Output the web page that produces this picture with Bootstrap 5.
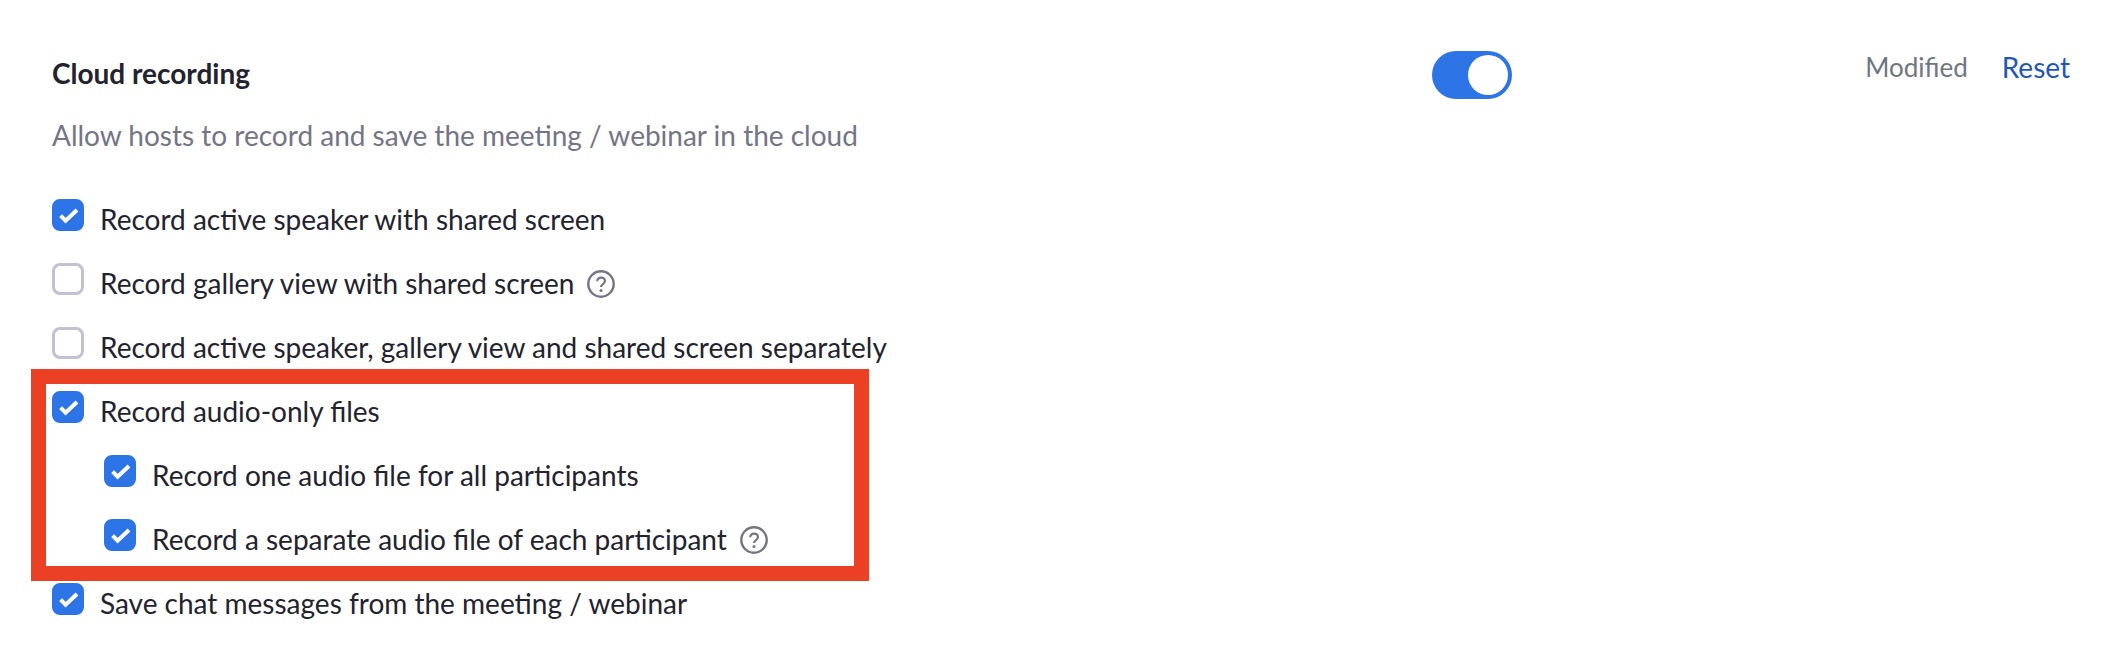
<!DOCTYPE html>
<html lang="en">
<head>
<meta charset="utf-8">
<title>Cloud recording</title>
<link rel="stylesheet" href="https://cdn.jsdelivr.net/npm/bootstrap@5.3.0/dist/css/bootstrap.min.css">
<style>
html,body{height:100%;}
body{background:#fff;font-family:"Lato","Liberation Sans",sans-serif;font-size:28px;color:#23232f;overflow:hidden;}
.setting-wrap{padding:46px 36px 0 52px;}
.setting-head{height:54px;}
.setting-title{font-size:28px;font-weight:700;line-height:54px;width:1381px;margin:0;}
.setting-switch{width:80px;height:48px;background:#2d74e7;border-radius:24px;padding:4px;flex:none;margin-top:4px;}
.setting-knob{width:40px;height:40px;border-radius:50%;background:#fff;}
.setting-modified{color:#6e7680;font-size:26px;margin-left:353px;line-height:54px;margin-bottom:13px;}
.setting-reset{color:#1f58b8;margin-left:34px;text-decoration:none;line-height:54px;margin-bottom:13px;}
.setting-desc{color:#747487;margin:0;line-height:64px;height:64px;margin-top:3px;}
.opt-list{padding-top:21px;}
.opt-row{height:64px;gap:16px;}
.opt-nested{padding-left:52px;}
.opt-row .form-check-input{width:32px;height:32px;margin:0 0 10px 0;border:3px solid #c1c1d3;border-radius:8px;flex:none;background-color:#fff;}
.opt-row .form-check-input:checked{background-color:#2d74e7;border-color:#2d74e7;background-origin:border-box;background-size:32px 32px;background-image:url("data:image/svg+xml,%3csvg xmlns='http://www.w3.org/2000/svg' viewBox='0 0 32 32'%3e%3cpath fill='none' stroke='%23fff' stroke-width='4' d='M8.6 16.6l5 5L25 11'/%3e%3c/svg%3e");}
.opt-label{line-height:64px;white-space:nowrap;padding-bottom:2px;}
.opt-help{flex:none;margin-left:-3px;}
.opt-group{position:relative;}
.opt-highlight{position:absolute;left:-21px;top:-11px;width:838px;height:212px;border:15px solid #ec4025;pointer-events:none;}
</style>
</head>
<body>
<div class="setting-wrap">
  <div class="setting-head d-flex align-items-center">
    <h2 class="setting-title">Cloud recording</h2>
    <div class="setting-switch"><div class="setting-knob ms-auto"></div></div>
    <span class="setting-modified">Modified</span>
    <a class="setting-reset" href="#">Reset</a>
  </div>
  <p class="setting-desc">Allow hosts to record and save the meeting / webinar in the cloud</p>
  <div class="opt-list">
    <div class="opt-row d-flex align-items-center"><input class="form-check-input" type="checkbox" checked aria-label="Record active speaker with shared screen"><span class="opt-label">Record active speaker with shared screen</span></div>
    <div class="opt-row d-flex align-items-center"><input class="form-check-input" type="checkbox" aria-label="Record gallery view with shared screen"><span class="opt-label">Record gallery view with shared screen</span>
      <svg class="opt-help" width="28" height="28" viewBox="0 0 28 28" aria-hidden="true"><circle cx="14" cy="14" r="12.7" fill="none" stroke="#747487" stroke-width="2.4"/><path d="M10.2 11.2c0-2.2 1.7-3.6 3.9-3.6s3.8 1.4 3.8 3.4c0 1.7-1 2.5-2.2 3.3-1.1.8-1.7 1.3-1.7 2.7" fill="none" stroke="#747487" stroke-width="2.2"/><circle cx="14" cy="20.4" r="1.5" fill="#747487"/></svg></div>
    <div class="opt-row d-flex align-items-center"><input class="form-check-input" type="checkbox" aria-label="Record active speaker, gallery view and shared screen separately"><span class="opt-label">Record active speaker, gallery view and shared screen separately</span></div>
    <div class="opt-group">
      <div class="opt-row d-flex align-items-center"><input class="form-check-input" type="checkbox" checked aria-label="Record audio-only files"><span class="opt-label">Record audio-only files</span></div>
      <div class="opt-row opt-nested d-flex align-items-center"><input class="form-check-input" type="checkbox" checked aria-label="Record one audio file for all participants"><span class="opt-label">Record one audio file for all participants</span></div>
      <div class="opt-row opt-nested d-flex align-items-center"><input class="form-check-input" type="checkbox" checked aria-label="Record a separate audio file of each participant"><span class="opt-label">Record a separate audio file of each participant</span>
        <svg class="opt-help" width="28" height="28" viewBox="0 0 28 28" aria-hidden="true"><circle cx="14" cy="14" r="12.7" fill="none" stroke="#747487" stroke-width="2.4"/><path d="M10.2 11.2c0-2.2 1.7-3.6 3.9-3.6s3.8 1.4 3.8 3.4c0 1.7-1 2.5-2.2 3.3-1.1.8-1.7 1.3-1.7 2.7" fill="none" stroke="#747487" stroke-width="2.2"/><circle cx="14" cy="20.4" r="1.5" fill="#747487"/></svg></div>
      <div class="opt-highlight"></div>
    </div>
    <div class="opt-row d-flex align-items-center"><input class="form-check-input" type="checkbox" checked aria-label="Save chat messages from the meeting / webinar"><span class="opt-label">Save chat messages from the meeting / webinar</span></div>
  </div>
</div>
<script src="https://cdn.jsdelivr.net/npm/bootstrap@5.3.0/dist/js/bootstrap.bundle.min.js"></script>
</body>
</html>
